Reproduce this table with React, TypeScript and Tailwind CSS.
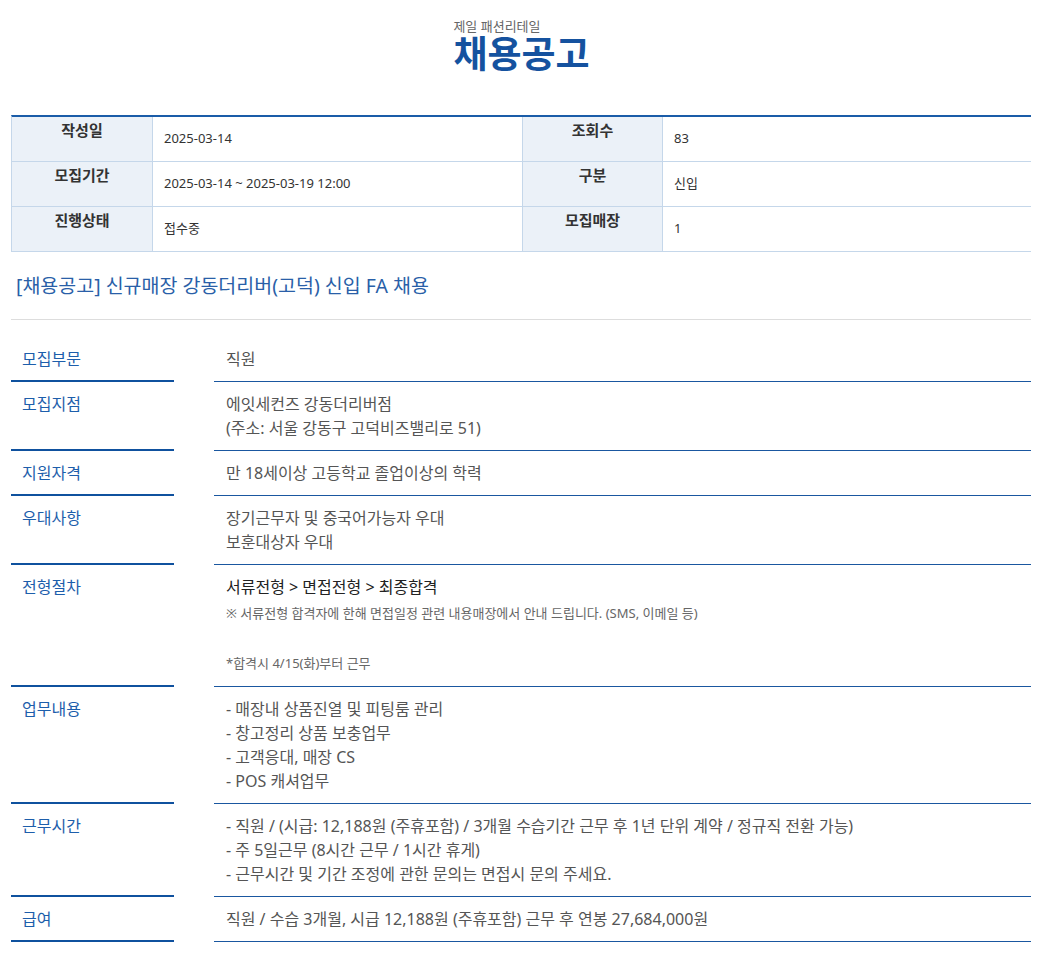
import React from "react";

const font = { fontFamily: '"Noto Sans", "Noto Sans CJK KR", sans-serif' };

const infoRows = [
  ["작성일", "2025-03-14", "조회수", "83"],
  ["모집기간", "2025-03-14 ~ 2025-03-19 12:00", "구분", "신입"],
  ["진행상태", "접수중", "모집매장", "1"],
];

const Row = ({ label, children }: { label: string; children: React.ReactNode }) => (
  <div className="flex items-stretch">
    <div className="w-[163px] shrink-0 border-b-2 border-[#0f519e] pl-[11px] pt-[10px] text-[16px] leading-[24px] text-[#1d5eab]">
      {label}
    </div>
    <div className="ml-[40px] flex-1 border-b border-[#1a57a0] py-[10px] pl-[12px] text-[16px] leading-[24px] text-[#555]">
      {children}
    </div>
  </div>
);

export default function App() {
  return (
    <div className="min-h-screen bg-white pl-[11px] pr-[10px]" style={font}>
      <div className="flex justify-center pt-[18px]">
        <div className="ml-[1px]">
          <p className="text-[13px] leading-[16px] text-[#666]">제일 패션리테일</p>
          <h1 className="mt-[1px] text-[37px] font-bold leading-[38px] text-[#15529f]">채용공고</h1>
        </div>
      </div>

      <div className="mt-[42px] border-t-2 border-l border-t-[#1a5ca8] border-l-[#c5d7ea]">
        {infoRows.map((r) => (
          <div key={r[0]} className="grid h-[45px] grid-cols-[141px_369px_141px_1fr] border-b border-[#c5d7ea]">
            <div className="border-r border-[#c5d7ea] bg-[#ebf1f8] pt-[3px] text-center text-[15px] font-bold leading-[20px] text-[#333]">
              {r[0]}
            </div>
            <div className="flex items-center pl-[11px] text-[13px] text-[#333]">{r[1]}</div>
            <div className="border-x border-[#c5d7ea] bg-[#ebf1f8] pt-[3px] text-center text-[15px] font-bold leading-[20px] text-[#333]">
              {r[2]}
            </div>
            <div className="flex items-center pl-[11px] text-[13px] text-[#333]">{r[3]}</div>
          </div>
        ))}
      </div>

      <div className="border-b border-[#dddddd] pb-[20px] pl-[5px] pt-[20px] text-[19.5px] leading-[27px] text-[#2a5fa8]">
        [채용공고] 신규매장 강동더리버(고덕) 신입 FA 채용
      </div>

      <div className="mt-[17px]">
        <Row label="모집부문">직원</Row>
        <Row label="모집지점">
          <p>에잇세컨즈 강동더리버점</p>
          <p>(주소: 서울 강동구 고덕비즈밸리로 51)</p>
        </Row>
        <Row label="지원자격">만 18세이상 고등학교 졸업이상의 학력</Row>
        <Row label="우대사항">
          <p>장기근무자 및 중국어가능자 우대</p>
          <p>보훈대상자 우대</p>
        </Row>
        <Row label="전형절차">
          <p className="text-[#222]">서류전형 &gt; 면접전형 &gt; 최종합격</p>
          <p className="mt-[2px] text-[13px] leading-[25px] text-[#666]">※ 서류전형 합격자에 한해 면접일정 관련 내용매장에서 안내 드립니다. (SMS, 이메일 등)</p>
          <p className="text-[13px] leading-[25px]">&nbsp;</p>
          <p className="text-[13px] leading-[25px] text-[#666]">*합격시 4/15(화)부터 근무</p>
        </Row>
        <Row label="업무내용">
          <p>- 매장내 상품진열 및 피팅룸 관리</p>
          <p>- 창고정리 상품 보충업무</p>
          <p>- 고객응대, 매장 CS</p>
          <p>- POS 캐셔업무</p>
        </Row>
        <Row label="근무시간">
          <p>- 직원 / (시급: 12,188원 (주휴포함) / 3개월 수습기간 근무 후 1년 단위 계약 / 정규직 전환 가능)</p>
          <p>- 주 5일근무 (8시간 근무 / 1시간 휴게)</p>
          <p>- 근무시간 및 기간 조정에 관한 문의는 면접시 문의 주세요.</p>
        </Row>
        <Row label="급여">직원 / 수습 3개월, 시급 12,188원 (주휴포함) 근무 후 연봉 27,684,000원</Row>
      </div>
    </div>
  );
}
